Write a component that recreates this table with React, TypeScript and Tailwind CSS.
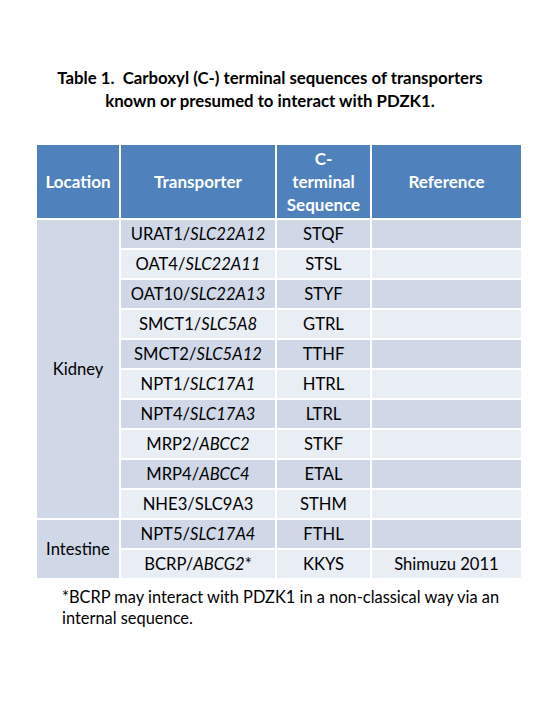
const rows: { name: string; gene: string; italic: boolean; star?: boolean; seq: string; ref: string }[] = [
  { name: 'URAT1/', gene: 'SLC22A12', italic: true, seq: 'STQF', ref: '' },
  { name: 'OAT4/', gene: 'SLC22A11', italic: true, seq: 'STSL', ref: '' },
  { name: 'OAT10/', gene: 'SLC22A13', italic: true, seq: 'STYF', ref: '' },
  { name: 'SMCT1/', gene: 'SLC5A8', italic: true, seq: 'GTRL', ref: '' },
  { name: 'SMCT2/', gene: 'SLC5A12', italic: true, seq: 'TTHF', ref: '' },
  { name: 'NPT1/', gene: 'SLC17A1', italic: true, seq: 'HTRL', ref: '' },
  { name: 'NPT4/', gene: 'SLC17A3', italic: true, seq: 'LTRL', ref: '' },
  { name: 'MRP2/', gene: 'ABCC2', italic: true, seq: 'STKF', ref: '' },
  { name: 'MRP4/', gene: 'ABCC4', italic: true, seq: 'ETAL', ref: '' },
  { name: 'NHE3/', gene: 'SLC9A3', italic: false, seq: 'STHM', ref: '' },
  { name: 'NPT5/', gene: 'SLC17A4', italic: true, seq: 'FTHL', ref: '' },
  { name: 'BCRP/', gene: 'ABCG2', italic: true, star: true, seq: 'KKYS', ref: 'Shimuzu 2011' },
]

const App = () => {
  const th = 'bg-[#4f81bd] text-white font-bold text-[17px] flex items-center justify-center text-center leading-[23px]'

  return (
    <div className="w-[540px] h-[720px] bg-white text-black font-['Lato',sans-serif]">
      <div className="pt-[66px] text-center text-[16.8px] font-bold leading-[23px]">
        <div>Table 1.&nbsp; Carboxyl (C-) terminal sequences of transporters</div>
        <div>known or presumed to interact with PDZK1.</div>
      </div>

      <div className="mt-[33px] ml-[37px] grid grid-cols-[82px_154px_93px_149px] grid-rows-[73px_repeat(12,28px)] gap-[2px] text-[16.6px]">
        <div className={th}>Location</div>
        <div className={th}>Transporter</div>
        <div className={th}>C-<br />terminal<br />Sequence</div>
        <div className={th}>Reference</div>

        <div className="bg-[#d0d8e8] row-span-10 col-start-1 row-start-2 flex items-center justify-center">Kidney</div>
        <div className="bg-[#d0d8e8] row-span-2 col-start-1 row-start-12 flex items-center justify-center">Intestine</div>

        {rows.map((r, i) => {
          const bg = i % 2 === 0 ? 'bg-[#d0d8e8]' : 'bg-[#e9edf4]'
          return (
            <div key={r.name} className="contents">
              <div className={`${bg} col-start-2 flex items-center justify-center`}>
                <span>
                  {r.name}
                  <span className={r.italic ? 'italic' : ''}>{r.gene}</span>
                  {r.star ? '*' : ''}
                </span>
              </div>
              <div className={`${bg} flex items-center justify-center`}>{r.seq}</div>
              <div className={`${bg} flex items-center justify-center`}>{r.ref}</div>
            </div>
          )
        })}
      </div>

      <div className="mt-[8px] ml-[62px] w-[460px] text-[16.4px] leading-[21px]">
        *BCRP may interact with PDZK1 in a non-classical way via an internal sequence.
      </div>
    </div>
  )
}

export default App
